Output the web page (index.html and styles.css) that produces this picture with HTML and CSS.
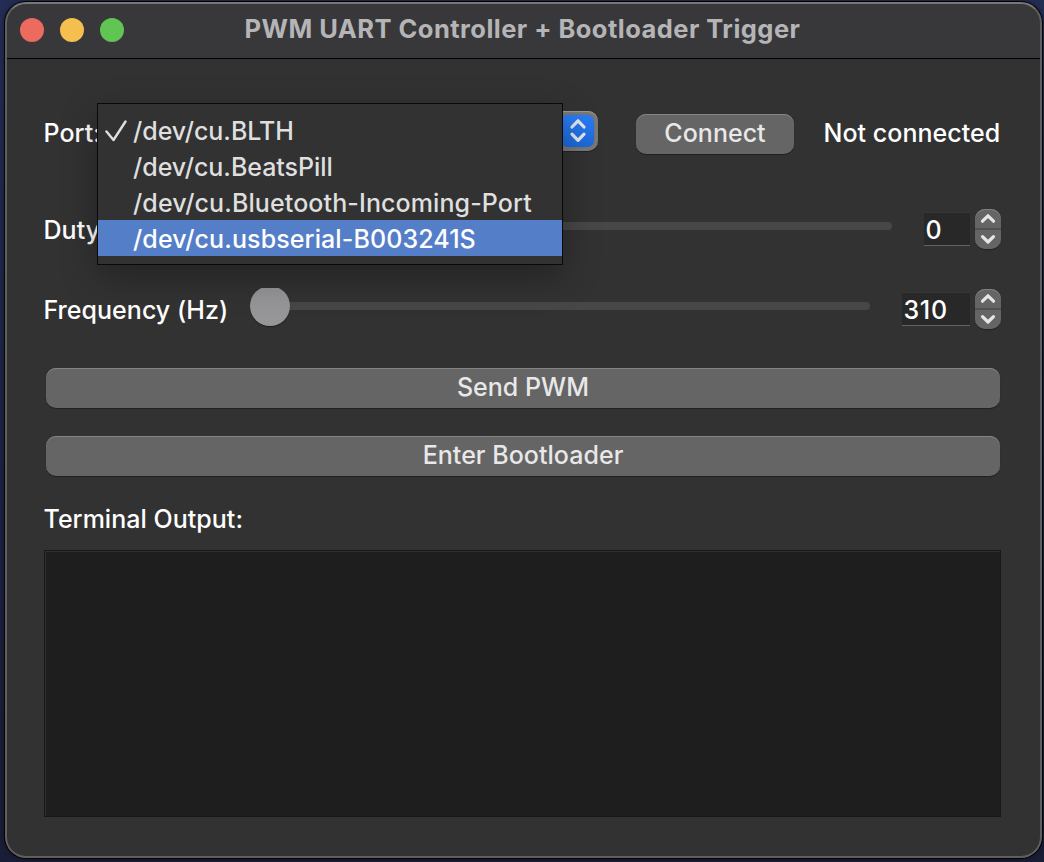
FILE: index.html
```html
<!DOCTYPE html>
<html lang="en">
<head>
<meta charset="utf-8">
<title>PWM UART Controller + Bootloader Trigger</title>
<link rel="stylesheet" href="styles.css">
</head>
<body>
<div class="window">
  <header class="titlebar">
    <div class="lights"><span class="light close"></span><span class="light minimize"></span><span class="light maximize"></span></div>
    <h1 class="title">PWM UART Controller + Bootloader Trigger</h1>
  </header>
  <main class="content">
    <section class="row port-row">
      <span class="label t-port">Port:</span>
      <div class="combo">
        <span class="combo-arrows">
          <svg width="34" height="34" viewBox="0 0 34 34"><path d="M11 13L17 6.8L23 13M11 20.2L17 26.4L23 20.2"/></svg>
        </span>
        <ul class="menu">
          <li class="item"><svg class="check" width="24" height="24" viewBox="0 0 24 24"><path d="M1.5 12.5L8.5 21L20.5 2.5"/></svg>/dev/cu.BLTH</li>
          <li class="item">/dev/cu.BeatsPill</li>
          <li class="item long">/dev/cu.Bluetooth-Incoming-Port</li>
          <li class="item long selected">/dev/cu.usbserial-B003241S</li>
        </ul>
      </div>
      <button class="button connect">Connect</button>
      <span class="label">Not connected</span>
    </section>
    <section class="row duty-row">
      <span class="label t-duty">Duty</span>
      <div class="slider"><span class="track"></span></div>
      <div class="field duty-field">0</div>
      <div class="stepper"><svg width="26" height="40" viewBox="0 0 26 40"><path d="M7.5 12.2L13 6.8L18.5 12.2M7.5 27.6L13 33L18.5 27.6"/></svg></div>
    </section>
    <section class="row freq-row">
      <span class="label">Frequency (Hz)</span>
      <div class="slider"><span class="track"></span><span class="knob-clip"><span class="knob"></span></span></div>
      <div class="field freq-field">310</div>
      <div class="stepper"><svg width="26" height="40" viewBox="0 0 26 40"><path d="M7.5 12.2L13 6.8L18.5 12.2M7.5 27.6L13 33L18.5 27.6"/></svg></div>
    </section>
    <button class="button wide send">Send PWM</button>
    <button class="button wide boot">Enter Bootloader</button>
    <span class="terminal-label">Terminal Output:</span>
    <div class="terminal"></div>
  </main>
</div>
</body>
</html>
```
FILE: styles.css
```css
* { box-sizing: border-box; }
body {
  margin: 0;
  height: 862px;
  padding: 2px 2px 4px 5px;
  overflow: hidden;
  background: linear-gradient(#232c52, #1c2342 50%, #191d35);
  font-family: Inter, "Liberation Sans", sans-serif;
  font-size: 25px;
  font-weight: 450;
  letter-spacing: .03px;
  line-height: 36px;
  color: #fff;
  white-space: nowrap;
}
.window {
  position: relative;
  width: 1037px;
  height: 856px;
  border-radius: 21px;
  background: #323232;
  box-shadow: 0 0 0 1px #050507, 0 0 5px rgba(0,0,0,.5);
  overflow: hidden;
}
.window::after {
  content: "";
  position: absolute;
  inset: 0;
  border: 2px solid #5f5f60;
  border-top-color: #777778;
  border-radius: 21px;
  pointer-events: none;
}
.titlebar {
  display: grid;
  height: 57px;
  background: #38383a;
  border-bottom: 1px solid #000;
}
.lights, .title { grid-area: 1 / 1; }
.lights { display: flex; gap: 16px; padding: 16px 0 0 15px; }
.light { width: 24px; height: 24px; border-radius: 50%; }
.close { background: #ed6a5e; }
.minimize { background: #f5bf4f; }
.maximize { background: #61c554; }
.title {
  margin: 0;
  padding: 9px 2px 0 0;
  text-align: center;
  font-size: 25.5px;
  font-weight: 700;
  letter-spacing: .46px;
  line-height: 36px;
  color: #b5b5b7;
}
.content { display: flex; flex-direction: column; padding: 50px 41px 0 39px; }
.row { display: flex; height: 40px; }
.port-row { margin-top: 2px; }
.label { flex: none; height: 36px; margin-left: -.5px; }
.port-row .label { margin-top: 4px; }
.duty-row .label, .freq-row .label { margin-top: 3px; }
.t-port { width: 60.5px; }
.combo {
  position: relative;
  flex: none;
  width: 494px;
  height: 40px;
  border-radius: 10px;
  padding: 4px 4px 0 0;
  display: flex;
  justify-content: flex-end;
  background: #797978;
  box-shadow: inset 0 1px #989898, 0 1px 1px rgba(0,0,0,.35);
}
.combo-arrows {
  width: 33px;
  height: 32px;
  border-radius: 7px;
  background: linear-gradient(#2a7df5, #1c68d9);
  box-shadow: 0 0 1px #294f85;
}
svg { display: block; fill: none; stroke: #e4e6ea; stroke-width: 3.2; stroke-linecap: round; stroke-linejoin: round; }
.combo-arrows svg { margin-top: -1px; }
.menu {
  position: absolute;
  z-index: 2;
  left: -7px;
  top: -8px;
  width: 466px;
  height: 162px;
  margin: 0;
  padding: 8px 0 0;
  border: 1px solid #090909;
  background: #323232;
  box-shadow: 0 12px 34px rgba(0,0,0,.3);
  list-style: none;
  color: #dfdfdf;
}
.item { position: relative; height: 36px; padding-left: 35px; line-height: 38px; letter-spacing: -.03px; }
.item.long { letter-spacing: .1px; }
.selected { background: #557ec8; color: #fff; }
.check { position: absolute; left: 7px; top: 7px; stroke: #dfdfdf; stroke-width: 2.4; }
.button {
  display: block;
  flex: none;
  height: 40px;
  border: 0;
  border-radius: 10px;
  padding: 0 0 2px;
  background: #656565;
  box-shadow: inset 0 1px #858585, 0 1px 1px rgba(0,0,0,.35);
  color: #e8e8e8;
  font: inherit;
  letter-spacing: inherit;
  text-align: center;
}
.connect { width: 158px; margin: 3px 30px 0 38px; }
.duty-row { margin-top: 58px; }
.freq-row { margin-top: 40px; }
.t-duty { width: 220px; }
.freq-row .label { width: 206.5px; }
.slider { position: relative; flex: 1; }
.track { display: block; height: 8px; margin-top: 13px; border-radius: 4px; background: #474747; }
.freq-row .slider { flex: none; width: 620px; }
.knob-clip { position: absolute; left: -2px; top: -1px; width: 44px; height: 42px; overflow: hidden; }
.knob { position: absolute; left: 2px; top: -2px; width: 40px; height: 40px; border-radius: 50%; background: #969698; box-shadow: 0 1px 1px rgba(0,0,0,.4); }
.field {
  height: 34px;
  margin-top: 3px;
  padding-left: 1.5px;
  background: #282828;
  border-top: 1px solid #363636;
  border-bottom: 1px solid #626262;
  line-height: 34px;
  letter-spacing: .7px;
}
.duty-field { width: 46px; margin-left: 32px; }
.freq-field { width: 68px; margin-left: 32px; }
.stepper {
  width: 26px;
  height: 40px;
  margin-left: 5px;
  border-radius: 10px;
  background: linear-gradient(#656565 19px, #515151 19px, #515151 21px, #656565 21px);
  box-shadow: inset 0 1px #808080, 0 1px 1px rgba(0,0,0,.35);
}
.wide { width: 954px; margin-left: 2px; }
.send { margin-top: 39px; }
.boot { margin-top: 28px; }
.terminal-label { height: 36px; margin-top: 25px; margin-left: -.5px; }
.terminal { height: 267px; width: 957px; margin-top: 13px; background: #1e1e1e; border: 1px solid #181818; box-shadow: inset 1px 1px #303030; }
```
